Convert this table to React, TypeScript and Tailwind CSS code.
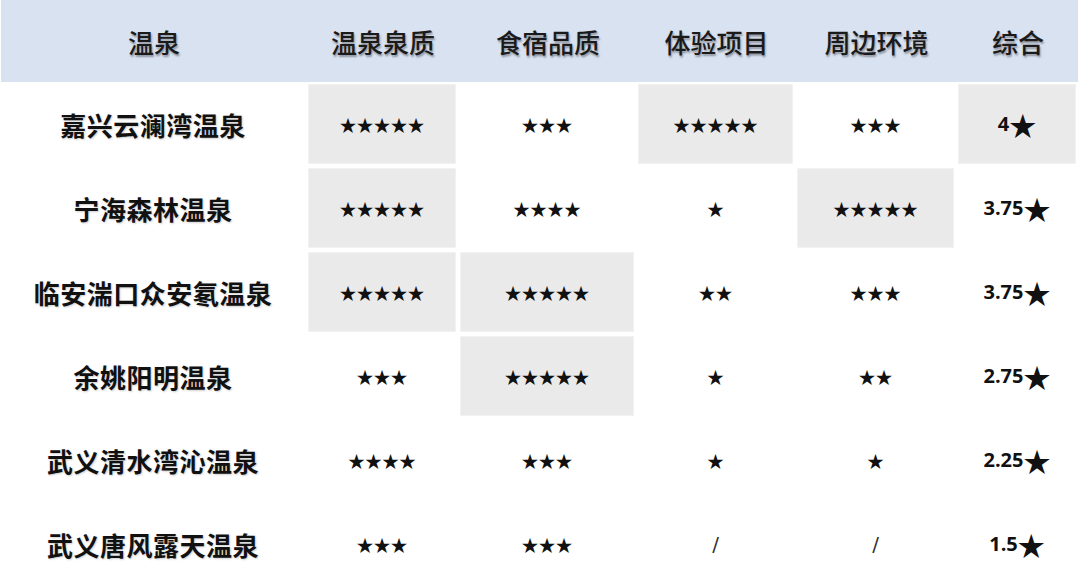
const headers = ['温泉', '温泉泉质', '食宿品质', '体验项目', '周边环境', '综合'];

type Row = { name: string; scores: string[]; total: string; shaded: number[] };

const rows: Row[] = [
  { name: '嘉兴云澜湾温泉', scores: ['★★★★★', '★★★', '★★★★★', '★★★'], total: '4', shaded: [0, 2, 4] },
  { name: '宁海森林温泉', scores: ['★★★★★', '★★★★', '★', '★★★★★'], total: '3.75', shaded: [0, 3] },
  { name: '临安湍口众安氡温泉', scores: ['★★★★★', '★★★★★', '★★', '★★★'], total: '3.75', shaded: [0, 1] },
  { name: '余姚阳明温泉', scores: ['★★★', '★★★★★', '★', '★★'], total: '2.75', shaded: [1] },
  { name: '武义清水湾沁温泉', scores: ['★★★★', '★★★', '★', '★'], total: '2.25', shaded: [] },
  { name: '武义唐风露天温泉', scores: ['★★★', '★★★', '/', '/'], total: '1.5', shaded: [] },
];

const cols = 'grid grid-cols-[306px_152px_178px_159px_161px_122px]';

function Cell({ shaded, children }: { shaded: boolean; children: React.ReactNode }) {
  return (
    <div className="h-[84px] p-[2px]">
      <div className={`h-full flex items-center justify-center ${shaded ? 'bg-[#ebeaeb] border border-[#f3f2f3]' : ''}`}>
        {children}
      </div>
    </div>
  );
}

export default function App() {
  return (
    <div className="w-[1080px] h-[586px] bg-white overflow-hidden text-[#111]" style={{ fontFamily: '"Noto Sans CJK SC", sans-serif' }}>
      <div className={`${cols} h-[82px] ml-[1px] w-[1077px] bg-[#d9e2f1]`}>
        {headers.map(h => (
          <div key={h} className="flex items-center justify-center text-[26px] font-medium text-[#1a1a1a] [text-shadow:1px_2px_2px_rgba(0,0,0,0.35)]">
            {h}
          </div>
        ))}
      </div>
      {rows.map(r => (
        <div key={r.name} className={cols}>
          <div className="h-[84px] flex items-center justify-center text-[26px] font-bold tracking-[0.5px] [text-shadow:1px_1px_2px_rgba(0,0,0,0.2)]">
            {r.name}
          </div>
          {r.scores.map((s, i) => (
            <Cell key={i} shaded={r.shaded.includes(i)}>
              {s === '/' ? (
                <span className="text-[20px] text-[#333]" style={{ fontFamily: '"DejaVu Sans", sans-serif' }}>/</span>
              ) : (
                <span className="text-[17px] leading-none">{s}</span>
              )}
            </Cell>
          ))}
          <Cell shaded={r.shaded.includes(4)}>
            <span className="flex items-center">
              <span className="text-[20px] font-bold" style={{ fontFamily: '"Open Sans", sans-serif' }}>{r.total}</span>
              <span className="text-[27px] leading-none">★</span>
            </span>
          </Cell>
        </div>
      ))}
    </div>
  );
}
